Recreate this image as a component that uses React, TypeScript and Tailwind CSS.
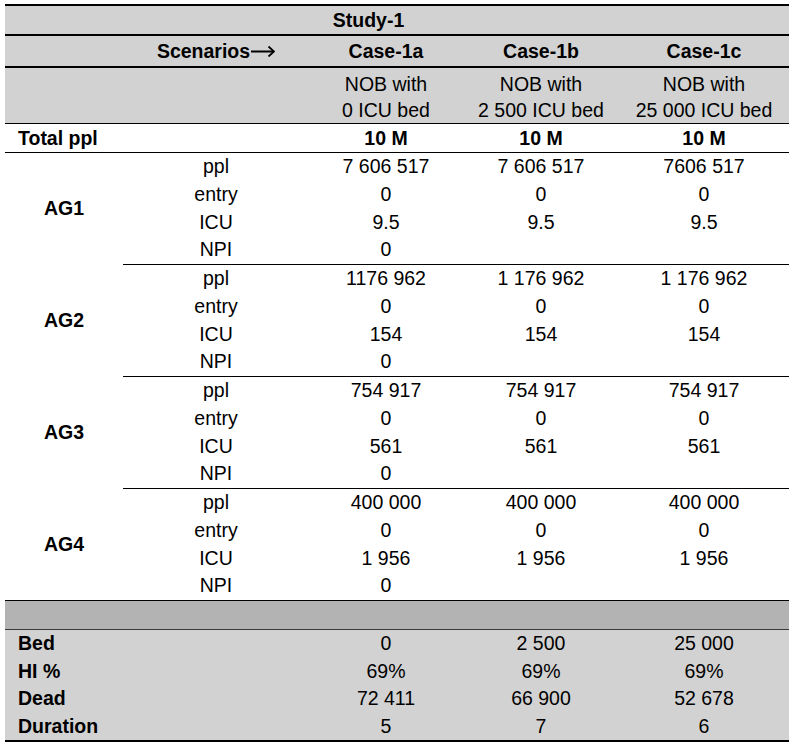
const COLS = 'grid grid-cols-[118px_186px_154px_156px_170px]'

interface Group {
  label: string
  rows: { name: string; a: string; b: string; c: string }[]
}

const GROUPS: Group[] = [
  {
    label: 'AG1',
    rows: [
      { name: 'ppl', a: '7 606 517', b: '7 606 517', c: '7606 517' },
      { name: 'entry', a: '0', b: '0', c: '0' },
      { name: 'ICU', a: '9.5', b: '9.5', c: '9.5' },
      { name: 'NPI', a: '0', b: '', c: '' },
    ],
  },
  {
    label: 'AG2',
    rows: [
      { name: 'ppl', a: '1176 962', b: '1 176 962', c: '1 176 962' },
      { name: 'entry', a: '0', b: '0', c: '0' },
      { name: 'ICU', a: '154', b: '154', c: '154' },
      { name: 'NPI', a: '0', b: '', c: '' },
    ],
  },
  {
    label: 'AG3',
    rows: [
      { name: 'ppl', a: '754 917', b: '754 917', c: '754 917' },
      { name: 'entry', a: '0', b: '0', c: '0' },
      { name: 'ICU', a: '561', b: '561', c: '561' },
      { name: 'NPI', a: '0', b: '', c: '' },
    ],
  },
  {
    label: 'AG4',
    rows: [
      { name: 'ppl', a: '400 000', b: '400 000', c: '400 000' },
      { name: 'entry', a: '0', b: '0', c: '0' },
      { name: 'ICU', a: '1 956', b: '1 956', c: '1 956' },
      { name: 'NPI', a: '0', b: '', c: '' },
    ],
  },
]

const SUMMARY = [
  { name: 'Bed', a: '0', b: '2 500', c: '25 000' },
  { name: 'HI %', a: '69%', b: '69%', c: '69%' },
  { name: 'Dead', a: '72 411', b: '66 900', c: '52 678' },
  { name: 'Duration', a: '5', b: '7', c: '6' },
]

function Arrow() {
  return (
    <svg width="24" height="12" viewBox="0 0 24 12" className="ml-[1px] inline-block" aria-hidden>
      <path d="M0 6.5H22.5" stroke="black" strokeWidth="2" fill="none" />
      <path d="M17.5 1.5L23 6.5L17.5 11.5" stroke="black" strokeWidth="1.8" fill="none" />
    </svg>
  )
}

export default function App() {
  return (
    <div className="min-h-[747px] w-[796px] bg-white pt-[4px] pl-[5px] text-[19.5px] text-black font-['Liberation_Sans',Arial,sans-serif]">
      <div className="w-[784px]">
        <div className="h-[2px] bg-black" />

        {/* Study title */}
        <div className={`${COLS} h-[28px] bg-[#d2d2d2] font-bold leading-[28px]`}>
          <div className="col-start-2 col-span-3 pr-[5px] text-center">Study-1</div>
        </div>
        <div className="h-[2px] bg-black" />

        {/* Scenarios */}
        <div className={`${COLS} h-[30px] bg-[#d2d2d2] text-center font-bold leading-[30px]`}>
          <div />
          <div className="flex items-center justify-center">
            <span>Scenarios</span>
            <Arrow />
          </div>
          <div>Case-1a</div>
          <div>Case-1b</div>
          <div>Case-1c</div>
        </div>
        <div className="h-[2px] bg-black" />

        {/* Descriptions */}
        <div className={`${COLS} h-[55px] bg-[#d2d2d2] pt-[3px] text-center leading-[26px]`}>
          <div />
          <div />
          <div>NOB with<br />0 ICU bed</div>
          <div>NOB with<br />2 500 ICU bed</div>
          <div>NOB with<br />25 000 ICU bed</div>
        </div>
        <div className="h-px bg-black" />

        {/* Total */}
        <div className={`${COLS} h-[28px] font-bold leading-[28px]`}>
          <div className="pl-[13px]">Total ppl</div>
          <div />
          <div className="text-center">10 M</div>
          <div className="text-center">10 M</div>
          <div className="text-center">10 M</div>
        </div>
        <div className="h-px bg-black" />

        {GROUPS.map((g, gi) => (
          <div key={g.label}>
            <div className={`${COLS} h-[111px] leading-[27.75px]`}>
              <div className="row-span-4 flex items-center justify-center font-bold">{g.label}</div>
              {g.rows.map((r) => (
                <div key={r.name} className="contents">
                  <div className="text-center">{r.name}</div>
                  <div className="text-center">{r.a}</div>
                  <div className="text-center">{r.b}</div>
                  <div className="text-center">{r.c}</div>
                </div>
              ))}
            </div>
            {gi < GROUPS.length - 1 ? (
              <div className="ml-[118px] h-px bg-black" />
            ) : (
              <div className="h-px bg-black" />
            )}
          </div>
        ))}

        {/* Spacer bar */}
        <div className="h-[28px] bg-[#b3b3b3]" />
        <div className="h-px bg-[#3a3a3a]" />

        {/* Summary */}
        <div className="bg-[#d2d2d2] leading-[27.5px]">
          {SUMMARY.map((r) => (
            <div key={r.name} className={`${COLS} h-[27.5px]`}>
              <div className="pl-[13px] font-bold">{r.name}</div>
              <div />
              <div className="text-center">{r.a}</div>
              <div className="text-center">{r.b}</div>
              <div className="text-center">{r.c}</div>
            </div>
          ))}
        </div>
        <div className="h-[2px] bg-black" />
      </div>
    </div>
  )
}
